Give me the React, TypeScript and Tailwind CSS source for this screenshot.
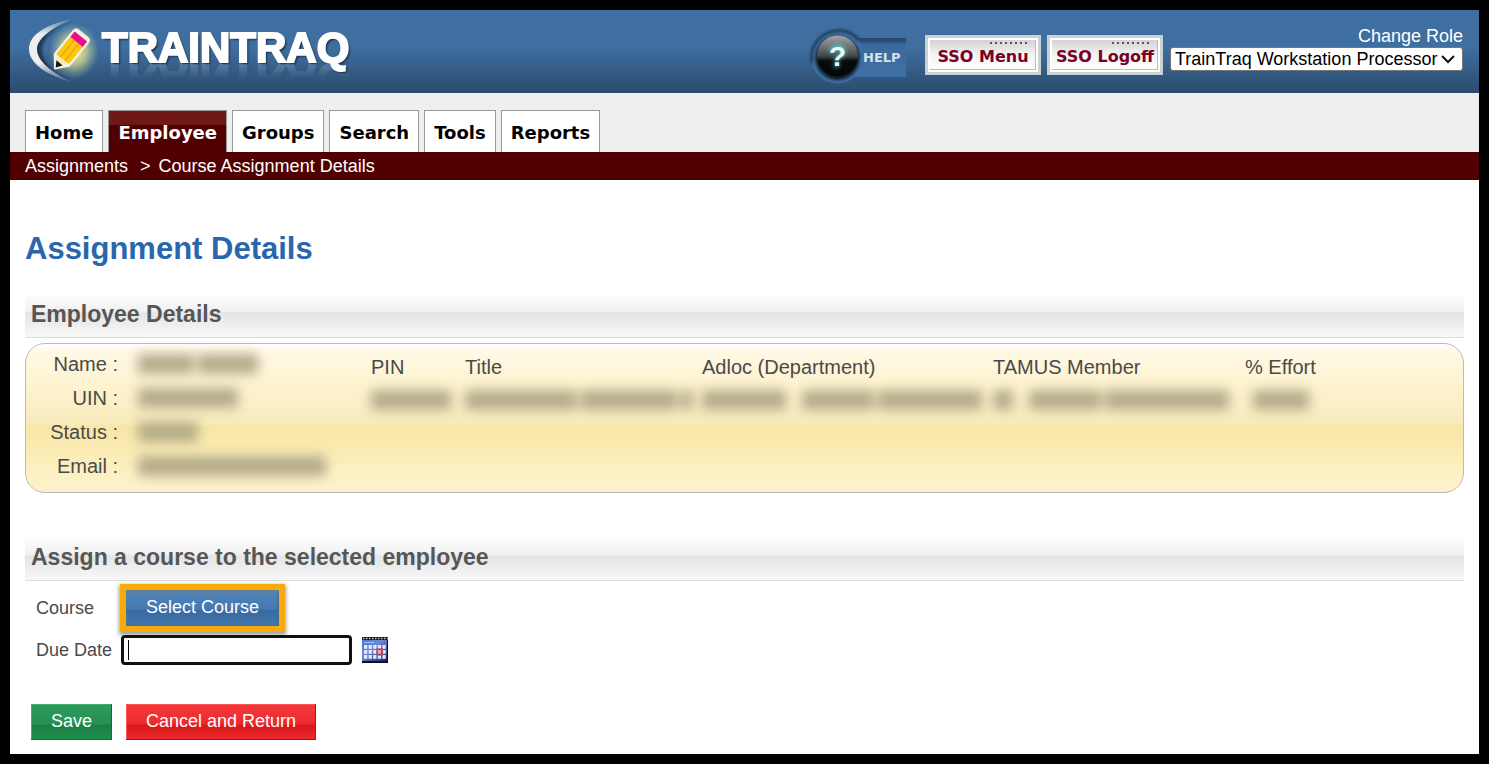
import type { ReactNode } from 'react';

const tabs = ['Home', 'Employee', 'Groups', 'Search', 'Tools', 'Reports'];

function LogoMark() {
  return (
    <svg width="76" height="70" viewBox="0 0 76 70" aria-hidden="true">
      <defs>
        <radialGradient id="glow">
          <stop offset="0" stopColor="#fdf980" />
          <stop offset="0.5" stopColor="#dfe38e" stopOpacity="0.7" />
          <stop offset="1" stopColor="#a9c49a" stopOpacity="0" />
        </radialGradient>
        <linearGradient id="arc" x1="0" y1="0" x2="0" y2="1">
          <stop offset="0" stopColor="#fff" stopOpacity="0.05" />
          <stop offset="0.25" stopColor="#fff" stopOpacity="0.9" />
          <stop offset="0.7" stopColor="#eee" />
          <stop offset="1" stopColor="#fff" stopOpacity="0.1" />
        </linearGradient>
        <linearGradient id="arcShade" x1="0" y1="0" x2="0" y2="1">
          <stop offset="0" stopColor="#1d3854" stopOpacity="0" />
          <stop offset="0.3" stopColor="#1d3854" stopOpacity="0.9" />
          <stop offset="0.7" stopColor="#1d3854" />
          <stop offset="1" stopColor="#1d3854" stopOpacity="0" />
        </linearGradient>
        <filter id="soft" x="-20%" y="-20%" width="140%" height="140%">
          <feGaussianBlur stdDeviation="1.2" />
        </filter>
      </defs>
      <path d="M51 4C26 9 7 20 7 34c0 14 16 26 41 33C29 58 16 46 16 34 16 23 29 12 51 4Z" fill="url(#arcShade)" filter="url(#soft)" />
      <ellipse cx="48" cy="35" rx="25" ry="28" fill="url(#glow)" />
      <path d="M49 2C20 8 3 19 3 33c0 14 17 26 42 33C25 56 11 45 11 33 11 22 28 10 49 2Z" fill="url(#arc)" />
      <g transform="translate(31 50) rotate(-51)">
        <path d="M-3 0 8 -9H38q3 0 3 3V6q0 3-3 3H8Z" fill="#f4f4ea" stroke="#f1f1e4" strokeWidth="2.500" strokeLinejoin="round" />
        <path d="M-1 0 10 -8V8Z" fill="#f6ecc0" />
        <path d="M-2 0 4 -4V4Z" fill="#151515" />
        <path d="M9 -8H31V8H9Z" fill="#fdc70c" />
        <path d="M9 -3H31M9 3H31" stroke="#dfa010" strokeWidth="1" />
        <path d="M31 -8H38V8H31Z" fill="#ea0c8c" />
      </g>
    </svg>
  );
}

function HelpBadge() {
  return (
    <svg width="100" height="60" viewBox="0 0 100 60" role="img" aria-label="Help">
      <defs>
        <linearGradient id="ball" x1="0" y1="0" x2="0" y2="1">
          <stop offset="0" stopColor="#a5a5a5" />
          <stop offset="0.5" stopColor="#41484a" />
          <stop offset="0.62" stopColor="#090b0c" />
          <stop offset="1" stopColor="#050606" />
        </linearGradient>
        <linearGradient id="slot" x1="0" y1="0" x2="0" y2="1">
          <stop offset="0" stopColor="#25456a" />
          <stop offset="0.1" stopColor="#2c507a" />
          <stop offset="0.16" stopColor="#3b699b" />
          <stop offset="1" stopColor="#3f70a5" />
        </linearGradient>
        <filter id="qglow" x="-60%" y="-60%" width="220%" height="220%">
          <feGaussianBlur stdDeviation="2.2" />
        </filter>
        <filter id="edge" x="-20%" y="-20%" width="140%" height="140%">
          <feGaussianBlur stdDeviation="1" />
        </filter>
      </defs>
      <path d="M40 12H97V51H40Z" fill="url(#slot)" />
      <circle cx="28.500" cy="30.500" r="27" fill="#3c6b9f" />
      <path d="M3 37A27 27 0 0 1 50 14" fill="none" stroke="#23425f" strokeWidth="3" filter="url(#edge)" />
      <circle cx="28.500" cy="32" r="22" fill="#10202f" filter="url(#edge)" />
      <circle cx="28.500" cy="30" r="20.500" fill="url(#ball)" />
      <text x="28.500" y="41" textAnchor="middle" fontFamily="Liberation Sans, sans-serif" fontWeight="700" fontSize="31" fill="#47d6d6" filter="url(#qglow)" aria-hidden="true">?</text>
      <text x="28.500" y="40" textAnchor="middle" fontFamily="Liberation Sans, sans-serif" fontWeight="700" fontSize="28" fill="#e4fbfb">?</text>
      <text x="54" y="36" fontFamily="DejaVu Sans, sans-serif" fontWeight="700" fontSize="13" fill="#d5e1ec">HELP</text>
    </svg>
  );
}

function SsoButton({ children }: { children: ReactNode }) {
  return (
    <button
      type="button"
      className="relative flex h-10 w-29 items-center justify-center border-3 border-[#ccd2d2] bg-[linear-gradient(#cfcfcf,#f4f4f4_50%,#fff)] pt-1 font-['DejaVu_Sans',sans-serif] text-[16px] leading-5 font-bold whitespace-nowrap text-[#7a0026] shadow-[inset_0_0_0_2px_#fff,inset_-2px_-2px_0_1px_#b8bcbc]"
    >
      <svg className="absolute top-1 right-2.5" width="38" height="2" viewBox="0 0 38 2" aria-hidden="true">
        <path d="M0 1H38" stroke="#555" strokeWidth="2" strokeDasharray="2 3" />
      </svg>
      {children}
    </button>
  );
}

function SectionTitle({ children }: { children: ReactNode }) {
  return (
    <h2 className="h-[45px] border-b border-[#dcdcdc] bg-[linear-gradient(#fff,#f0f0f0_42%,#e4e4e4_46%,#f8f8f8)] px-1.5 pt-[5px] text-[23px] leading-8 font-bold text-[#565656]">
      {children}
    </h2>
  );
}

function Redacted({ widths }: { widths: string[] }) {
  return (
    <span className="flex h-5 gap-1 blur-[6px]">
      {widths.map((w, i) => (
        <span key={i} className={`h-5 bg-[#b5ac8b] ${w}`} />
      ))}
    </span>
  );
}

const buttonBase = 'h-9 px-5 pb-0.5 text-[18px] leading-6 whitespace-nowrap text-white';

function CalendarIcon() {
  const cols = [0, 1, 2, 3, 4];
  return (
    <svg width="26" height="26" viewBox="0 0 26 26" aria-hidden="true">
      <defs>
        <linearGradient id="cal" x1="0" y1="0" x2="1" y2="1">
          <stop offset="0" stopColor="#4a78d8" />
          <stop offset="0.4" stopColor="#6f86d4" />
          <stop offset="1" stopColor="#1c2464" />
        </linearGradient>
      </defs>
      <rect width="26" height="26" fill="#10131f" />
      <rect y="3" width="25" height="21" fill="url(#cal)" />
      <path d="M1 1.500H26" stroke="#c9d2c8" strokeWidth="1.500" strokeDasharray="1.500 1.500" />
      <path d="M2 5.500H12" stroke="#a8c0f4" strokeWidth="1" />
      {[8, 13, 18].map((y) =>
        cols.map((c) => (
          <rect key={`${y}-${c}`} x={2 + c * 4.6} y={y} width="3.300" height="3.800" fill={c === 3 && y === 13 ? '#e0a8b4' : '#e3e8ff'} />
        )),
      )}
      <rect x="15" y="12" width="5.500" height="6" fill="none" stroke="#b64a66" strokeWidth="1.200" />
    </svg>
  );
}

export default function App() {
  return (
    <div className="min-h-screen border-10 border-black bg-white font-['Liberation_Sans',Arial,sans-serif] text-[#4a4a4a]">
      <header className="flex h-[83px] justify-between bg-[linear-gradient(#3f6fa2,#3f6ea0_45%,#2b4b6d)] pr-4 pl-4">
        <div className="flex items-start pt-1.5">
          <LogoMark />
          <span className="pt-1 text-[42px] leading-14 font-bold text-white [-webkit-box-reflect:below_-25px_linear-gradient(transparent_55%,rgba(255,255,255,0.35))] [-webkit-text-stroke:2px_white] [text-shadow:2px_2px_2px_#1b3048]">
            TRAINTRAQ
          </span>
        </div>
        <div className="flex items-start">
          <a href="#help" className="mt-4 mr-4">
            <HelpBadge />
          </a>
          <div className="mt-[25px] flex gap-1.5">
            <SsoButton>SSO Menu</SsoButton>
            <SsoButton>SSO Logoff</SsoButton>
          </div>
          <div className="mt-[15px] ml-[7px] flex flex-col items-end">
            <label htmlFor="role" className="text-[18px] leading-[22px] text-white">
              Change Role
            </label>
            <div className="relative">
              <select
                id="role"
                className="block h-6 w-[293px] appearance-none rounded-[3px] border border-[#767676] bg-white pl-1 text-[18px] leading-5 text-black"
              >
                <option>TrainTraq Workstation Processor</option>
              </select>
              <svg className="pointer-events-none absolute top-2 right-2" width="14" height="9" viewBox="0 0 14 9" aria-hidden="true">
                <path d="M1 1l6 6 6-6" fill="none" stroke="#111" strokeWidth="2" />
              </svg>
            </div>
          </div>
        </div>
      </header>

      <nav className="flex gap-[5px] bg-[#eee] px-[15px] pt-[17px]">
        {tabs.map((tab) => (
          <a
            key={tab}
            href={`#${tab.toLowerCase()}`}
            className={`h-[42px] border border-b-0 border-[#999] px-[9px] pt-2 font-['DejaVu_Sans',Verdana,sans-serif] text-[18px] leading-7 font-bold ${
              tab === 'Employee' ? 'bg-[linear-gradient(#701818_35%,#500000_35%)] text-white' : 'bg-white text-black'
            }`}
          >
            {tab}
          </a>
        ))}
      </nav>
      <div className="flex h-7 gap-3 bg-[#500000] px-[15px] text-[18px] leading-7 text-white">
        <a href="#assignments">Assignments</a>
        <span className="-mr-1">&gt;</span>
        <span>Course Assignment Details</span>
      </div>

      <main className="px-[15px] pt-[49px] pb-3.5">
        <h1 className="mb-6 text-[31px] leading-10 font-bold text-[#2a66ae]">Assignment Details</h1>

        <section>
          <SectionTitle>Employee Details</SectionTitle>
          <div className="mt-[5px] flex h-[150px] rounded-[20px] border border-[#bbb] bg-[linear-gradient(#fff_0,#fff9e5_5%,#fdf3d0_28%,#f7ebba_54%,#f7e6a6_56%,#fbebb3_72%,#fdf1c4_88%,#fcf1cc)] pt-[3px] text-[20px]">
            <dl className="grid w-[345px] grid-cols-[92px_1fr] content-start gap-x-5 text-right">
              <dt className="leading-[34px]">Name :</dt>
              <dd className="self-center"><Redacted widths={['w-14', 'w-15']} /></dd>
              <dt className="leading-[34px]">UIN :</dt>
              <dd className="self-center"><Redacted widths={['w-25']} /></dd>
              <dt className="leading-[34px]">Status :</dt>
              <dd className="self-center"><Redacted widths={['w-15']} /></dd>
              <dt className="leading-[34px]">Email :</dt>
              <dd className="self-center"><Redacted widths={['w-47']} /></dd>
            </dl>
            <table className="table-fixed self-start text-left">
              <colgroup>
                <col className="w-[94px]" />
                <col className="w-[237px]" />
                <col className="w-[291px]" />
                <col className="w-[252px]" />
                <col className="w-[90px]" />
              </colgroup>
              <thead>
                <tr className="h-[39px]">
                  <th className="font-normal">PIN</th>
                  <th className="font-normal">Title</th>
                  <th className="font-normal">Adloc (Department)</th>
                  <th className="font-normal">TAMUS Member</th>
                  <th className="font-normal">% Effort</th>
                </tr>
              </thead>
              <tbody>
                <tr className="h-7">
                  <td><Redacted widths={['w-20']} /></td>
                  <td><Redacted widths={['w-28', 'w-24', 'w-3']} /></td>
                  <td><Redacted widths={['w-21', 'ml-3 w-18', 'w-26']} /></td>
                  <td><Redacted widths={['w-5', 'ml-3 w-18', 'w-31']} /></td>
                  <td><Redacted widths={['ml-2 w-14']} /></td>
                </tr>
              </tbody>
            </table>
          </div>
        </section>

        <section className="mt-[43px]">
          <SectionTitle>Assign a course to the selected employee</SectionTitle>
          <form>
            <div className="grid grid-cols-[85px_1fr] items-center gap-y-[9px] pt-[9px] pl-[11px] text-[18px] leading-6">
              <span id="course-label">Course</span>
              <div className="pl-[5px]">
                <button
                  type="button"
                  aria-describedby="course-label"
                  className={`${buttonBase} relative block bg-[linear-gradient(#4f84ba,#447ab1_52%,#366a9f_58%,#4478af)] shadow-[inset_0_3px_3px_#657f99,inset_-1px_0_2px_#345d88,0_0_0_6px_#f8aa0b,0_2px_4px_7px_#00000060]`}
                >
                  Select Course
                </button>
              </div>
              <label htmlFor="due">Due Date</label>
              <div className="flex items-center">
                <div className="relative">
                  <input
                    id="due"
                    type="text"
                    className="block h-[30px] w-[231px] rounded-[4px] border-3 border-[#101010] bg-white px-1 text-[18px] outline-none"
                  />
                  <span className="absolute top-[5px] left-[7px] h-5 w-px bg-black" />
                </div>
                <button type="button" aria-label="Choose date" className="ml-2.5">
                  <CalendarIcon />
                </button>
              </div>
            </div>
            <div className="mt-[39px] flex gap-3.5 pl-1.5">
              <button
                type="button"
                className={`${buttonBase} bg-[linear-gradient(#2f9c5b,#259154_55%,#187f42_60%,#21904f)] shadow-[inset_-1px_-1px_0_#0c7038,inset_1px_1px_0_#45ab6e]`}
              >
                Save
              </button>
              <button
                type="button"
                className={`${buttonBase} bg-[linear-gradient(#f63a3c,#ec2a2d_55%,#d9171b_60%,#ee2a2e)] shadow-[inset_-1px_-1px_0_#b80f13,inset_1px_1px_0_#fa5557]`}
              >
                Cancel and Return
              </button>
            </div>
          </form>
        </section>
      </main>
    </div>
  );
}
